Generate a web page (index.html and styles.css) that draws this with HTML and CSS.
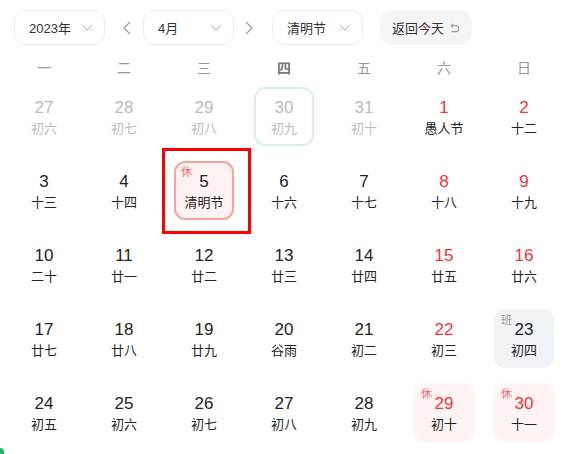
FILE: index.html
```html
<!DOCTYPE html>
<html lang="zh-CN">
<head>
<meta charset="utf-8">
<title>日历</title>
<link rel="stylesheet" href="styles.css">
</head>
<body>
<div class="cal">
  <div class="toolbar">
    <div class="select year"><span>2023年</span><svg class="chev" width="10" height="6" viewBox="0 0 10 6"><polyline points="0.5,0.5 5,5 9.5,0.5"/></svg></div>
    <span class="nav prev"><svg width="8" height="14" viewBox="0 0 8 14"><polyline points="7,1 1,7 7,13"/></svg></span>
    <div class="select month"><span>4月</span><svg class="chev" width="10" height="6" viewBox="0 0 10 6"><polyline points="0.5,0.5 5,5 9.5,0.5"/></svg></div>
    <span class="nav next"><svg width="8" height="14" viewBox="0 0 8 14"><polyline points="1,1 7,7 1,13"/></svg></span>
    <div class="select holiday"><span>清明节</span><svg class="chev" width="10" height="6" viewBox="0 0 10 6"><polyline points="0.5,0.5 5,5 9.5,0.5"/></svg></div>
    <div class="today-btn"><span>返回今天</span><svg class="undo" width="10" height="10" viewBox="0 0 10 10"><path d="M3 1 L1.2 2.8 L3 4.6 M1.2 2.8 H6 A2.9 2.9 0 0 1 6 8.6 H1.5"/></svg></div>
  </div>
  <div class="week">
    <span>一</span><span>二</span><span>三</span><span class="cur">四</span><span>五</span><span>六</span><span>日</span>
  </div>
  <div class="days">
    <div class="day"><div class="cell muted"><span class="num">27</span><span class="lunar">初六</span></div></div>
    <div class="day"><div class="cell muted"><span class="num">28</span><span class="lunar">初七</span></div></div>
    <div class="day"><div class="cell muted"><span class="num">29</span><span class="lunar">初八</span></div></div>
    <div class="day"><div class="cell muted today"><span class="num">30</span><span class="lunar">初九</span></div></div>
    <div class="day"><div class="cell muted"><span class="num">31</span><span class="lunar">初十</span></div></div>
    <div class="day"><div class="cell weekend"><span class="num">1</span><span class="lunar">愚人节</span></div></div>
    <div class="day"><div class="cell weekend"><span class="num">2</span><span class="lunar">十二</span></div></div>

    <div class="day"><div class="cell"><span class="num">3</span><span class="lunar">十三</span></div></div>
    <div class="day"><div class="cell"><span class="num">4</span><span class="lunar">十四</span></div></div>
    <div class="day"><div class="cell rest selected"><span class="tag">休</span><span class="num">5</span><span class="lunar">清明节</span></div><div class="focus"></div></div>
    <div class="day"><div class="cell"><span class="num">6</span><span class="lunar">十六</span></div></div>
    <div class="day"><div class="cell"><span class="num">7</span><span class="lunar">十七</span></div></div>
    <div class="day"><div class="cell weekend"><span class="num">8</span><span class="lunar">十八</span></div></div>
    <div class="day"><div class="cell weekend"><span class="num">9</span><span class="lunar">十九</span></div></div>

    <div class="day"><div class="cell"><span class="num">10</span><span class="lunar">二十</span></div></div>
    <div class="day"><div class="cell"><span class="num">11</span><span class="lunar">廿一</span></div></div>
    <div class="day"><div class="cell"><span class="num">12</span><span class="lunar">廿二</span></div></div>
    <div class="day"><div class="cell"><span class="num">13</span><span class="lunar">廿三</span></div></div>
    <div class="day"><div class="cell"><span class="num">14</span><span class="lunar">廿四</span></div></div>
    <div class="day"><div class="cell weekend"><span class="num">15</span><span class="lunar">廿五</span></div></div>
    <div class="day"><div class="cell weekend"><span class="num">16</span><span class="lunar">廿六</span></div></div>

    <div class="day"><div class="cell"><span class="num">17</span><span class="lunar">廿七</span></div></div>
    <div class="day"><div class="cell"><span class="num">18</span><span class="lunar">廿八</span></div></div>
    <div class="day"><div class="cell"><span class="num">19</span><span class="lunar">廿九</span></div></div>
    <div class="day"><div class="cell"><span class="num">20</span><span class="lunar">谷雨</span></div></div>
    <div class="day"><div class="cell"><span class="num">21</span><span class="lunar">初二</span></div></div>
    <div class="day"><div class="cell weekend"><span class="num">22</span><span class="lunar">初三</span></div></div>
    <div class="day"><div class="cell work"><span class="tag">班</span><span class="num">23</span><span class="lunar">初四</span></div></div>

    <div class="day"><div class="cell"><span class="num">24</span><span class="lunar">初五</span></div></div>
    <div class="day"><div class="cell"><span class="num">25</span><span class="lunar">初六</span></div></div>
    <div class="day"><div class="cell"><span class="num">26</span><span class="lunar">初七</span></div></div>
    <div class="day"><div class="cell"><span class="num">27</span><span class="lunar">初八</span></div></div>
    <div class="day"><div class="cell"><span class="num">28</span><span class="lunar">初九</span></div></div>
    <div class="day"><div class="cell weekend rest soft"><span class="tag">休</span><span class="num">29</span><span class="lunar">初十</span></div></div>
    <div class="day"><div class="cell weekend rest soft"><span class="tag">休</span><span class="num">30</span><span class="lunar">十一</span></div></div>
  </div>
</div>
<div class="corner"></div>
</body>
</html>
```
FILE: styles.css
```css
* { box-sizing: border-box; }
html, body { margin: 0; padding: 0; background: #fff; }
body {
  width: 566px;
  height: 454px;
  overflow: hidden;
  position: relative;
  font-family: "Liberation Sans", "Noto Sans CJK SC", sans-serif;
  color: #222;
}
.cal { padding: 10px 2px 0 4px; }

.toolbar {
  display: flex;
  align-items: center;
  height: 35px;
  padding-left: 10px;
}
.select {
  width: 91px;
  height: 35px;
  border: 1px solid #ececec;
  border-radius: 11px;
  display: flex;
  align-items: center;
  justify-content: space-between;
  padding: 0 12px 0 14px;
  font-size: 13px;
  color: #333;
}
.chev polyline, .nav polyline {
  fill: none;
  stroke: #a8a8a8;
  stroke-width: 1;
}
.nav {
  width: 24px;
  height: 35px;
  display: flex;
  align-items: center;
  justify-content: center;
}
.nav polyline { stroke: #999; stroke-width: 1.2; }
.prev { margin: 0 4px 0 10px; }
.next { margin: 0 11px 0 3px; }
.today-btn {
  margin-left: 17px;
  width: 92px;
  height: 35px;
  border-radius: 12px;
  background: #f5f5f5;
  display: flex;
  align-items: center;
  padding-left: 12px;
  gap: 6px;
  font-size: 13px;
  color: #333;
}
.undo path { fill: none; stroke: #999; stroke-width: 1.1; }

.week {
  display: grid;
  grid-template-columns: repeat(7, 80px);
  padding: 13px 0 1px;
  font-size: 14px;
  line-height: 20px;
  color: #999;
  text-align: center;
}
.week .cur { color: #777; font-weight: bold; }

.days {
  display: grid;
  grid-template-columns: repeat(7, 80px);
  grid-auto-rows: 74px;
  align-items: center;
  justify-items: center;
}
.day { position: relative; }
.cell {
  position: relative;
  width: 60px;
  height: 59px;
  border-radius: 11px;
  display: flex;
  flex-direction: column;
  align-items: center;
  padding-top: 10px;
}
.num {
  font-size: 17px;
  line-height: 22px;
  color: #222;
}
.lunar {
  margin-top: 1px;
  font-size: 13px;
  line-height: 18px;
  color: #222;
}
.muted .num, .muted .lunar { color: #bbb; }
.weekend .num { color: #f4333c; }
.today { border: 2px solid #d7f2e5; padding-top: 8px; }
.tag {
  position: absolute;
  left: 7px;
  top: 4px;
  font-size: 11px;
  line-height: 14px;
}
.rest .tag { color: #f66; }
.work .tag { color: #999; }
.selected {
  background: #fff2f2;
  border: 2px solid #f8a2a2;
  padding-top: 8px;
}
.selected .tag { left: 5px; top: 2px; }
.soft { background: #fff3f3; }
.work { background: #f0f3f6; }
.focus {
  position: absolute;
  left: -12px;
  top: -13px;
  width: 89px;
  height: 86px;
  border: 3px solid #f00;
}
.corner {
  position: absolute;
  left: 0;
  bottom: 0;
  width: 4px;
  height: 6px;
  background: #22b573;
  border-top-right-radius: 4px;
}
```
